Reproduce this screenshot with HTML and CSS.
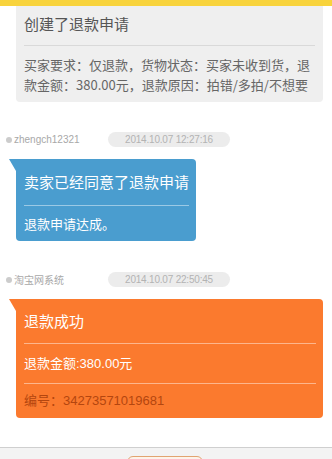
FILE: index.html
```html
<!DOCTYPE html>
<html lang="zh-CN">
<head>
<meta charset="utf-8">
<title>退款详情</title>
<link rel="stylesheet" href="styles.css">
</head>
<body>
<div class="topbar"></div>
<div class="page">
  <section class="card">
    <div class="card-title">创建了退款申请</div>
    <div class="card-body">
      <div class="line">买家要求：仅退款，货物状态：买家未收到货，退</div>
      <div class="line">款金额：380.00元，退款原因：拍错/多拍/不想要</div>
    </div>
  </section>

  <div class="meta">
    <div class="who"><span class="dot"></span>zhengch12321</div>
    <div class="time">2014.10.07 12:27:16</div>
  </div>
  <div class="bubble blue">
    <div class="b-title">卖家已经同意了退款申请</div>
    <div class="b-row b-last">退款申请达成。</div>
  </div>

  <div class="meta meta2">
    <div class="who"><span class="dot"></span>淘宝网系统</div>
    <div class="time">2014.10.07 22:50:45</div>
  </div>
  <div class="bubble orange">
    <div class="b-title o-title">退款成功</div>
    <div class="b-row o-amount">退款金额:380.00元</div>
    <div class="b-row o-num">编号：34273571019681</div>
  </div>
</div>
<footer class="footer">
  <div class="btn"></div>
</footer>
</body>
</html>
```

FILE: styles.css
```css
html, body {
  margin: 0;
  padding: 0;
  background: #ffffff;
}
body {
  width: 332px;
  height: 459px;
  overflow: hidden;
  font-family: "Liberation Sans", "Noto Sans CJK SC", sans-serif;
}
.topbar {
  height: 6px;
  background: #f8d33c;
}
.page {
  padding: 0 9px 29px 16px;
}
.card {
  background: #efefef;
  border-radius: 0 0 4px 4px;
  padding: 0 8px;
}
.card-title {
  font-family: "Noto Sans CJK SC", sans-serif;
  font-size: 15px;
  line-height: 22px;
  color: #555;
  padding: 7px 0 10px;
  border-bottom: 1px solid #d9d9d9;
}
.card-body {
  padding: 9px 0 7px;
  font-family: "Noto Sans CJK SC", sans-serif;
  font-size: 13px;
  line-height: 20px;
  color: #666;
}
.line {
  white-space: nowrap;
  overflow: hidden;
}
.meta {
  display: grid;
  grid-template-columns: 102px 122px;
  align-items: center;
  margin: 30px 0 0 -10px;
  height: 15px;
}
.meta2 {
  margin-top: 31px;
}
.who {
  display: flex;
  align-items: center;
  gap: 2px;
  font-size: 10px;
  color: #a8a8a8;
  white-space: nowrap;
}
.dot {
  width: 6px;
  height: 6px;
  border-radius: 50%;
  background: #cccccc;
}
.time {
  height: 15px;
  line-height: 15px;
  border-radius: 8px;
  background: #ececec;
  color: #b3b3b3;
  font-size: 10px;
  text-align: center;
  letter-spacing: -0.2px;
}
.bubble {
  position: relative;
  margin-top: 12px;
  border-radius: 0 4px 4px 4px;
  color: #fff;
  padding: 0 7px 0 8px;
}
.bubble::before {
  content: "";
  position: absolute;
  left: -7px;
  top: 0;
  width: 7px;
  height: 12px;
  background: inherit;
  clip-path: polygon(0 0, 100% 0, 100% 100%);
}
.blue {
  background: #4a9dcf;
  width: fit-content;
}
.orange {
  background: #fb7a2e;
}
.b-title {
  font-family: "Noto Sans CJK SC", sans-serif;
  font-size: 15px;
  line-height: 22px;
  padding: 12px 0;
  border-bottom: 1px solid rgba(255, 255, 255, 0.45);
}
.b-row {
  font-size: 13px;
  line-height: 20px;
}
.b-last {
  font-family: "Noto Sans CJK SC", sans-serif;
  padding: 8px 0 7px;
}
.o-title {
  padding: 11px 0;
}
.o-amount {
  padding: 10px 0 9px;
  border-bottom: 1px solid rgba(255, 255, 255, 0.45);
}
.o-num {
  padding: 7px 0;
  color: #b4460f;
}
.footer {
  border-top: 1px solid #cfcfcf;
  background: #f3f3f3;
  height: 11px;
  overflow: hidden;
  padding-top: 0;
  display: flex;
  justify-content: center;
}
.btn {
  flex: none;
  width: 74px;
  height: 28px;
  margin: 8px 0 0 -2px;
  border: 1px solid #e2a470;
  border-radius: 6px;
  background: #fdf3ea;
}
```
